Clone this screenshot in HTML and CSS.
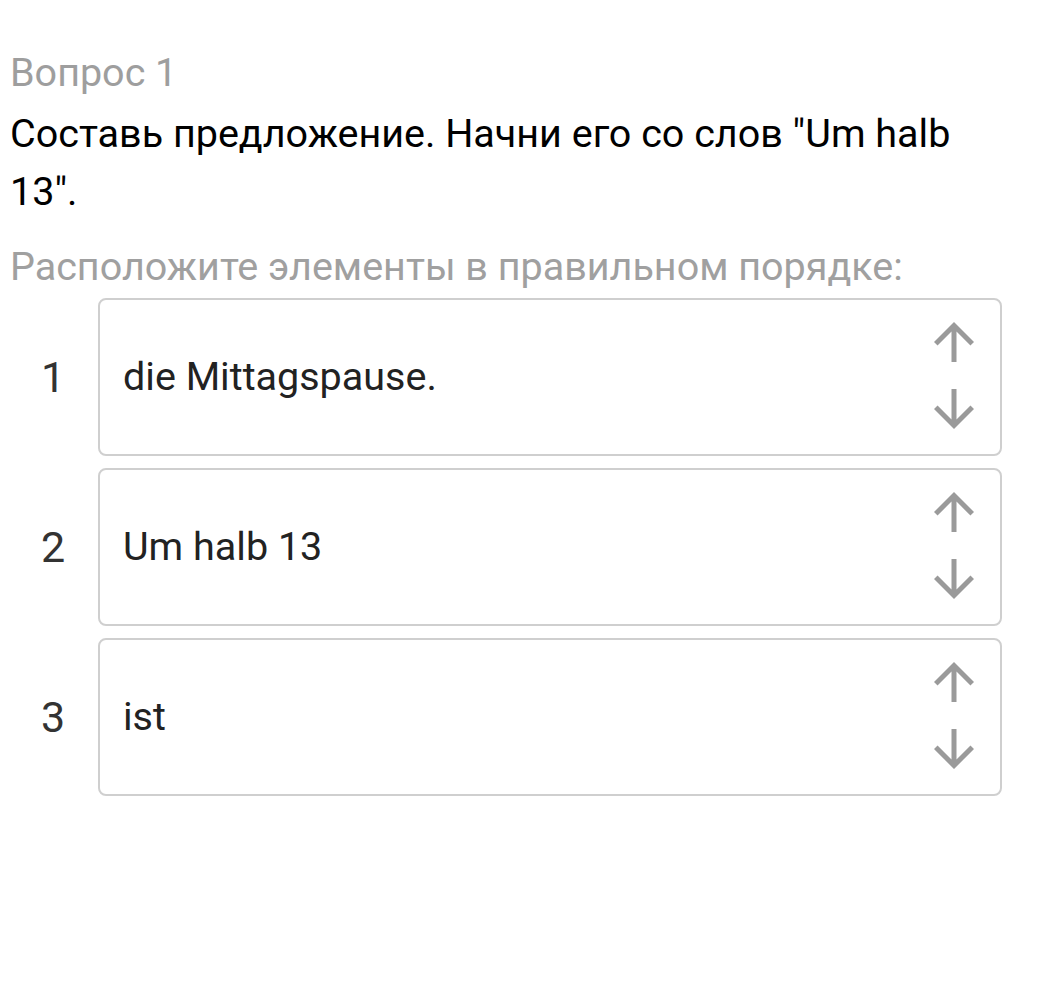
FILE: index.html
```html
<!DOCTYPE html>
<html lang="ru">
<head>
<meta charset="utf-8">
<link rel="stylesheet" href="styles.css">
</head>
<body>
<div class="page">
  <div class="qnum">Вопрос 1</div>
  <div class="qtext">Составь предложение. Начни его со слов "Um halb 13".</div>
  <div class="hint">Расположите элементы в правильном порядке:</div>
  <div class="list">
    <div class="row">
      <div class="num">1</div>
      <div class="box">
        <div class="label">die Mittagspause.</div>
        <div class="arrows">
          <svg class="icon" viewBox="0 0 24 24"><path d="M4 12l1.41 1.41L11 7.83V20h2V7.83l5.58 5.59L20 12l-8-8-8 8z"/></svg>
          <svg class="icon" viewBox="0 0 24 24"><path d="M20 12l-1.41-1.41L13 16.17V4h-2v12.17l-5.58-5.59L4 12l8 8 8-8z"/></svg>
        </div>
      </div>
    </div>
    <div class="row">
      <div class="num">2</div>
      <div class="box">
        <div class="label">Um halb 13</div>
        <div class="arrows">
          <svg class="icon" viewBox="0 0 24 24"><path d="M4 12l1.41 1.41L11 7.83V20h2V7.83l5.58 5.59L20 12l-8-8-8 8z"/></svg>
          <svg class="icon" viewBox="0 0 24 24"><path d="M20 12l-1.41-1.41L13 16.17V4h-2v12.17l-5.58-5.59L4 12l8 8 8-8z"/></svg>
        </div>
      </div>
    </div>
    <div class="row">
      <div class="num">3</div>
      <div class="box">
        <div class="label">ist</div>
        <div class="arrows">
          <svg class="icon" viewBox="0 0 24 24"><path d="M4 12l1.41 1.41L11 7.83V20h2V7.83l5.58 5.59L20 12l-8-8-8 8z"/></svg>
          <svg class="icon" viewBox="0 0 24 24"><path d="M20 12l-1.41-1.41L13 16.17V4h-2v12.17l-5.58-5.59L4 12l8 8 8-8z"/></svg>
        </div>
      </div>
    </div>
  </div>
</div>
</body>
</html>
```
FILE: styles.css
```css
html, body {
  margin: 0;
  padding: 0;
  background: #ffffff;
}
body {
  font-family: Roboto, "Noto Sans", sans-serif;
  font-size: 39.5px;
  line-height: 58px;
}
.page {
  padding: 44px 43px 0 10px;
}
.qnum {
  color: #9e9e9e;
}
.qtext {
  color: #000000;
  margin-top: 3px;
  width: 960px;
}
.hint {
  color: #a0a0a0;
  margin-top: 17px;
}
.list {
  display: flex;
  flex-direction: column;
  gap: 12px;
  margin-top: 1.5px;
}
.row {
  display: flex;
  align-items: center;
}
.num {
  width: 88px;
  flex: none;
  box-sizing: border-box;
  padding-right: 2px;
  text-align: center;
  font-size: 43px;
  color: #333333;
}
.box {
  flex: 1;
  height: 158px;
  box-sizing: border-box;
  border: 2px solid #cfcfcf;
  border-radius: 8px;
  display: flex;
  align-items: center;
  justify-content: space-between;
  padding: 0 16px 0 23px;
}
.label {
  color: #222222;
}
.arrows {
  display: flex;
  flex-direction: column;
  gap: 7px;
  margin-top: -2px;
}
.icon {
  width: 60px;
  height: 60px;
  display: block;
  fill: #9a9a9a;
}
```
